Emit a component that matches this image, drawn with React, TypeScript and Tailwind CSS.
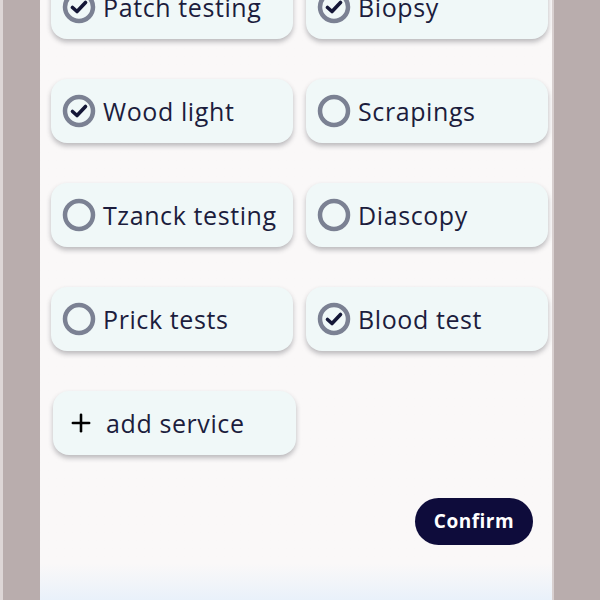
import { Plus } from "lucide-react";

type Service = { name: string; checked: boolean };

const services: Service[] = [
  { name: "Patch testing", checked: true },
  { name: "Biopsy", checked: true },
  { name: "Wood light", checked: true },
  { name: "Scrapings", checked: false },
  { name: "Tzanck testing", checked: false },
  { name: "Diascopy", checked: false },
  { name: "Prick tests", checked: false },
  { name: "Blood test", checked: true },
];

function RadioMark({ checked }: { checked: boolean }) {
  return (
    <svg width="34" height="34" viewBox="0 0 34 34" className="shrink-0">
      <circle cx="17" cy="17" r="14" fill="none" stroke="#7b8193" strokeWidth="4.5" />
      {checked && (
        <path
          d="M10.5 17.5 L15 21.5 L23.5 12.5"
          fill="none"
          stroke="#141737"
          strokeWidth="3.6"
          strokeLinecap="round"
          strokeLinejoin="round"
        />
      )}
    </svg>
  );
}

export default function App() {
  return (
    <div className="w-[600px] h-[600px] overflow-hidden bg-[#b9adad] flex">
      <div className="w-[3px] h-full bg-[#ddd6d6]" />
      <div className="w-[37px] h-full" />
      <main
        className="w-[512px] h-full flex flex-col bg-gradient-to-b from-[#faf8f8] from-[94%] to-[#e9f1fa] pl-[11px] pr-[4px] font-['Open_Sans',sans-serif] text-[#1c1d3d]"
        data-testid="services-panel"
      >
        <div className="grid grid-cols-2 gap-x-[13px] gap-y-[40px] mt-[-25px]">
          {services.map((s) => (
            <div
              key={s.name}
              className="h-[64px] rounded-[16px] bg-[#f0f8f8] shadow-[0_3px_5px_rgba(40,40,50,0.3)] flex items-center pl-[11px] gap-[7px]"
              data-testid={`service-${s.name}`}
            >
              <RadioMark checked={s.checked} />
              <span className="text-[25px] leading-none tracking-[0.6px]">{s.name}</span>
            </div>
          ))}
          <div
            className="h-[64px] ml-[2px] w-[243px] rounded-[16px] bg-[#f0f8f8] shadow-[0_3px_5px_rgba(40,40,50,0.3)] flex items-center pl-[14px] gap-[11px]"
            data-testid="add-service"
          >
            <Plus className="w-[28px] h-[28px] text-black" strokeWidth={2.2} />
            <span className="text-[25px] leading-none tracking-[0.6px]">add service</span>
          </div>
        </div>

        <div className="flex justify-end mt-[43px] pr-[15px]">
          <button
            className="w-[118px] h-[47px] rounded-full bg-[#0e0c3b] text-white font-bold text-[19px] tracking-[0.5px]"
            data-testid="button-confirm"
          >
            Confirm
          </button>
        </div>
      </main>
      <div className="w-[2px] h-full bg-[#d8d0d0]" />
    </div>
  );
}
